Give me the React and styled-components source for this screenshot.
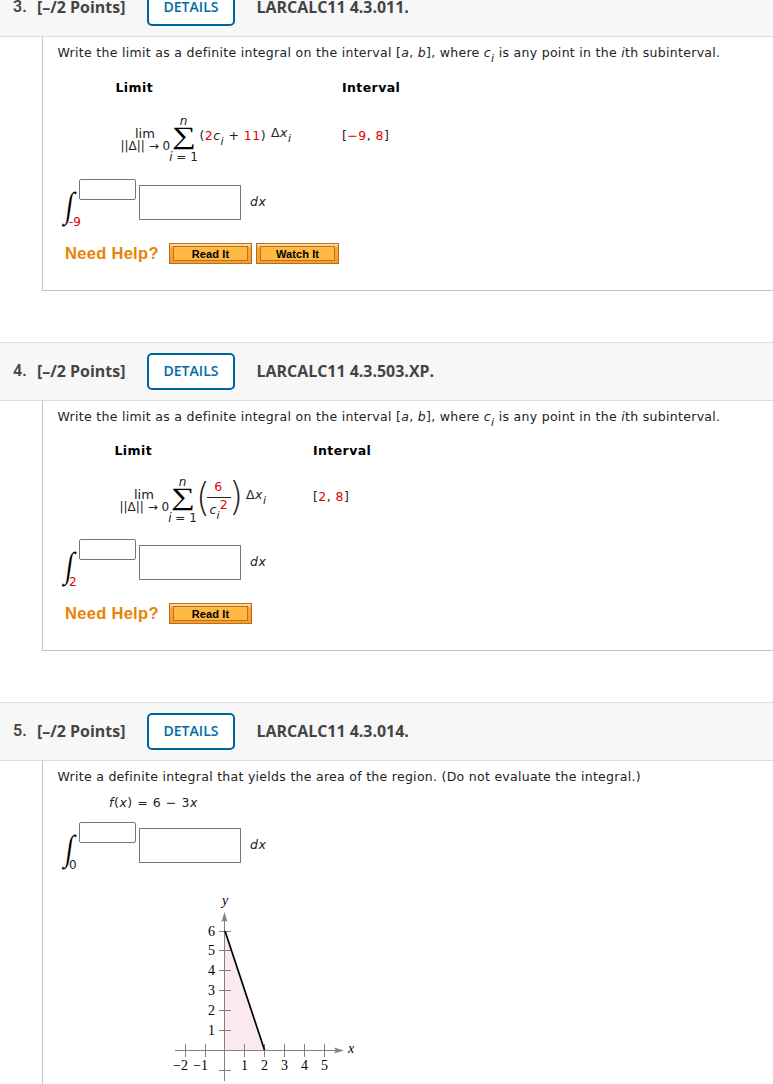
import React from 'react';
import styled, { createGlobalStyle } from 'styled-components';

const Global = createGlobalStyle`
  html, body { margin: 0; background: #fff; overflow: hidden; }
  * { box-sizing: border-box; }
`;

const Page = styled.main`
  height: 1084px;
  overflow: hidden;
  font-family: 'DejaVu Sans', Verdana, sans-serif;
  font-size: 12.5px;
  letter-spacing: 0.45px;
  line-height: 18px;
  color: #222;
  white-space: nowrap;
`;

const Question = styled.section`
  margin-bottom: 51px;
  &:first-child { margin-top: -22px; }
`;

const Header = styled.header`
  display: flex;
  align-items: center;
  height: 59px;
  padding-left: 13px;
  background: #f7f7f7;
  border-top: 1px solid #dcdcdc;
  border-bottom: 1px solid #dcdcdc;
  font: 700 15.95px/20px 'Open Sans', sans-serif;
  letter-spacing: 0;
  color: #444;
`;

const Number = styled.span`
  width: 24px;
  padding-bottom: 2px;
  font-family: Roboto, sans-serif;
  font-weight: 600;
  font-size: 16px;
`;

const Points = styled.span`
  width: 110px;
  padding-bottom: 2px;
`;

const Details = styled.button`
  width: 88px;
  height: 37px;
  margin-right: 21.5px;
  padding: 0 0 2px;
  border: 2px solid #00629b;
  border-radius: 5px;
  background: #fff;
  color: #006ba6;
  font: 600 14px/20px 'Open Sans', sans-serif;
  letter-spacing: 0.05px;
`;

const Code = styled.span`
  padding-bottom: 2px;
`;

const Body = styled.div`
  height: ${(p) => p.$height}px;
  margin-left: 42px;
  padding: 7px 0 0 15px;
  border-left: 1px solid #c4c4c4;
  border-bottom: 1px solid #c4c4c4;
`;

const Prompt = styled.p`
  margin: 0 0 0 -0.5px;
  height: 18px;
  letter-spacing: ${(p) => p.$tracking || 0.285}px;
`;

const Index = styled.i`
  position: relative;
  top: 5px;
  font-size: 11px;
  line-height: 1;
`;

const Red = styled.span`
  color: #e60000;
`;

const LimitTable = styled.div`
  display: grid;
  grid-template-columns: ${(p) => p.$first}px 1fr;
  grid-template-rows: 18px 48px;
  row-gap: ${(p) => p.$gap}px;
  margin: ${(p) => p.$top}px 0 0 ${(p) => p.$left}px;
`;

const ColumnTitle = styled.b`
  color: #000;
  letter-spacing: 0.4px;
`;

const Formula = styled.div`
  display: flex;
  height: 48px;
  margin-left: 5px;
`;

const Lim = styled.div`
  width: 50px;
  padding-top: 12px;
  font-size: 12px;
  line-height: 12px;
  letter-spacing: 0;
`;

const LimWord = styled.div`
  padding-left: 14.5px;
  font-size: 13px;
`;

const Sum = styled.div`
  display: flex;
  flex-direction: column;
  align-items: center;
  width: 26px;
  font-size: 12px;
  line-height: 10px;
  letter-spacing: 0;
`;

const Sigma = styled.span`
  height: 26px;
  font: 25px/23px 'Liberation Serif', serif;
  color: #000;
  transform: translateY(-2px) scale(1.34, 1);
`;

const Term = styled.span`
  padding-top: ${(p) => p.$top}px;
  padding-left: ${(p) => p.$left}px;
`;

const Paren = styled.div`
  width: 9px;
  margin-top: -2px;
  font: 200 30px/44px 'DejaVu Sans', sans-serif;
  letter-spacing: 0;
  text-indent: -1px;
  transform: translateY(1px) scale(1.2, 1.28);
`;

const Fraction = styled.div`
  width: 24px;
  height: 44px;
`;

const Numerator = styled.div`
  height: 21px;
  padding-top: 1px;
  border-bottom: 1px solid #222;
  text-align: center;
`;

const Denominator = styled.div`
  padding: 3px 0 0 3px;
  letter-spacing: 0.2px;
`;

const Exponent = styled.span`
  position: relative;
  top: -5px;
  color: #e60000;
`;

const IntegralRow = styled.div`
  display: flex;
  height: 49px;
  margin: ${(p) => p.$top}px 0 0 5px;
`;

const IntegralSign = styled.span`
  width: 6px;
  height: 49px;
  padding-top: 10px;
  font: 33px/40px 'Liberation Serif', serif;
  letter-spacing: 0;
  color: #000;
  transform: translate(3.5px, -4px) skewX(-8deg) scale(0.8, 1.08);
`;

const Limits = styled.div`
  display: flex;
  flex-direction: column;
  justify-content: space-between;
  width: 70px;
  font-size: 12px;
  line-height: 11px;
  letter-spacing: 0;
`;

const Field = styled.input`
  display: block;
  width: ${(p) => p.$w}px;
  height: ${(p) => p.$h}px;
  margin: ${(p) => p.$margin};
  padding: 0;
  border: 1px solid #767676;
  border-radius: ${(p) => p.$radius || 0}px;
  background: #fff;
`;

const Differential = styled.i`
  padding: 14px 0 0 9px;
`;

const HelpRow = styled.div`
  display: flex;
  align-items: center;
  gap: 4px;
  height: 21px;
  margin: 15px 0 0 7px;
`;

const HelpTitle = styled.strong`
  width: 100px;
  padding-bottom: 2px;
  font: 700 16.5px/20px 'Liberation Sans', Arial, sans-serif;
  letter-spacing: 0.3px;
  color: #e98300;
`;

const HelpButton = styled.button`
  width: 83px;
  height: 21px;
  padding: 2px 3px;
  border: 1px solid #b76d1c;
  background: linear-gradient(#fde3bd 0, #fba53c 4px, #fb9a2c 100%);
`;

const HelpLabel = styled.span`
  display: block;
  height: 15px;
  border: 1px solid #b87421;
  background: #fdb941;
  font: 700 11px/15px 'Liberation Sans', Arial, sans-serif;
  letter-spacing: 0.1px;
  color: #000;
`;

const FunctionLine = styled.div`
  height: 18px;
  margin: 8px 0 0 51px;
  letter-spacing: 0.55px;
`;

const Graph = styled.svg`
  display: block;
  width: 210px;
  height: 200px;
  margin: 19px 0 0 92px;
  font: 14px 'Liberation Serif', serif;
  letter-spacing: 0;
  fill: #000;
`;

function QuestionHeader({ number, code }) {
  return (
    <Header>
      <Number>{number}.</Number>
      <Points>[–/2 Points]</Points>
      <Details>DETAILS</Details>
      <Code>{code}</Code>
    </Header>
  );
}

function LimitPrompt() {
  return (
    <Prompt $tracking={0.3}>
      Write the limit as a definite integral on the interval [<i>a</i>, <i>b</i>], where <i>c</i>
      <Index>i</Index> is any point in the <i>i</i>th subinterval.
    </Prompt>
  );
}

function LimitOfSum() {
  return (
    <>
      <Lim>
        <LimWord>lim</LimWord>
        <div>||Δ|| → 0</div>
      </Lim>
      <Sum>
        <i>n</i>
        <Sigma>∑</Sigma>
        <span><i>i</i> = 1</span>
      </Sum>
    </>
  );
}

function Integral({ lower, top }) {
  return (
    <IntegralRow $top={top}>
      <IntegralSign>∫</IntegralSign>
      <Limits>
        <Field $w={57} $h={21} $margin="0 0 0 10px" $radius={2} />
        {lower}
      </Limits>
      <Field $w={102} $h={35} $margin="6px 0 0" />
      <Differential>dx</Differential>
    </IntegralRow>
  );
}

function Help({ labels }) {
  return (
    <HelpRow>
      <HelpTitle>Need Help?</HelpTitle>
      {labels.map((label) => (
        <HelpButton key={label}><HelpLabel>{label}</HelpLabel></HelpButton>
      ))}
    </HelpRow>
  );
}

const X_TICKS = [[-2, 35.5], [-1, 55.5], [1, 94.5], [2, 114.5], [3, 134.5], [4, 154.5], [5, 174.5]];
const Y_TICKS = [[6, 41.5], [5, 60.5], [4, 80.5], [3, 100.5], [2, 120.5], [1, 140.5], [0, 180.5]];

function RegionGraph() {
  return (
    <Graph viewBox="0 0 210 200">
      <path d="M75 41L114.5 160H75Z" fill="#fce8f1" />
      <g stroke="#808285" fill="none">
        <path d="M74.5 191V30M25 160.5H186" />
        {X_TICKS.map(([v, x]) => <path key={v} d={`M${x} 154V167`} />)}
        {Y_TICKS.map(([v, y]) => <path key={v} d={`M69 ${y}H81`} />)}
      </g>
      <path d="M74.5 22L77.5 32L74.5 30.5L71.5 32ZM194 160.5L184 157.5L186 160.5L184 163.5Z" fill="#808285" />
      <path d="M75 41L114.5 160" stroke="#000" strokeWidth="1.7" />
      {X_TICKS.map(([v, x]) => (
        <text key={v} x={v < 0 ? x - 5 : x} y="180" textAnchor="middle">{String(v).replace('-', '−')}</text>
      ))}
      {Y_TICKS.filter(([v]) => v).map(([v, y]) => (
        <text key={v} x="61.5" y={y + 4.5} textAnchor="middle">{v}</text>
      ))}
      <text x="75" y="15" textAnchor="middle" fontStyle="italic">y</text>
      <text x="198" y="163" fontStyle="italic">x</text>
    </Graph>
  );
}

export default function App() {
  return (
    <>
      <Global />
      <Page>
        <Question>
          <QuestionHeader number={3} code="LARCALC11 4.3.011." />
          <Body $height={254}>
            <LimitPrompt />
            <LimitTable $first={226.5} $left={57.5} $top={17} $gap={19}>
              <ColumnTitle>Limit</ColumnTitle>
              <ColumnTitle>Interval</ColumnTitle>
              <Formula>
                <LimitOfSum />
                <Term $top={11} $left={3}>
                  (<Red>2</Red><i>c</i><Index>i</Index> + <Red>11</Red>)
                </Term>
                <Term $top={8} $left={5}>Δ<i>x</i><Index>i</Index></Term>
              </Formula>
              <Term $top={11} $left={0}>[<Red>−9</Red>, <Red>8</Red>]</Term>
            </LimitTable>
            <Integral top={15} lower={<Red>-9</Red>} />
            <Help labels={['Read It', 'Watch It']} />
          </Body>
        </Question>
        <Question>
          <QuestionHeader number={4} code="LARCALC11 4.3.503.XP." />
          <Body $height={250}>
            <LimitPrompt />
            <LimitTable $first={198.5} $left={56.5} $top={16} $gap={17}>
              <ColumnTitle>Limit</ColumnTitle>
              <ColumnTitle>Interval</ColumnTitle>
              <Formula>
                <LimitOfSum />
                <Term $top={0} $left={2}><Paren>(</Paren></Term>
                <Fraction>
                  <Numerator><Red>6</Red></Numerator>
                  <Denominator><i>c</i><Index>i</Index><Exponent>2</Exponent></Denominator>
                </Fraction>
                <Paren>)</Paren>
                <Term $top={9} $left={6.5}>Δ<i>x</i><Index>i</Index></Term>
              </Formula>
              <Term $top={11} $left={0}>[<Red>2</Red>, <Red>8</Red>]</Term>
            </LimitTable>
            <Integral top={14} lower={<Red>2</Red>} />
            <Help labels={['Read It']} />
          </Body>
        </Question>
        <Question>
          <QuestionHeader number={5} code="LARCALC11 4.3.014." />
          <Body $height={420}>
            <Prompt>Write a definite integral that yields the area of the region. (Do not evaluate the integral.)</Prompt>
            <FunctionLine><i>f</i>(<i>x</i>) = 6 − 3<i>x</i></FunctionLine>
            <Integral top={10} lower={<span>0</span>} />
            <RegionGraph />
          </Body>
        </Question>
      </Page>
    </>
  );
}
